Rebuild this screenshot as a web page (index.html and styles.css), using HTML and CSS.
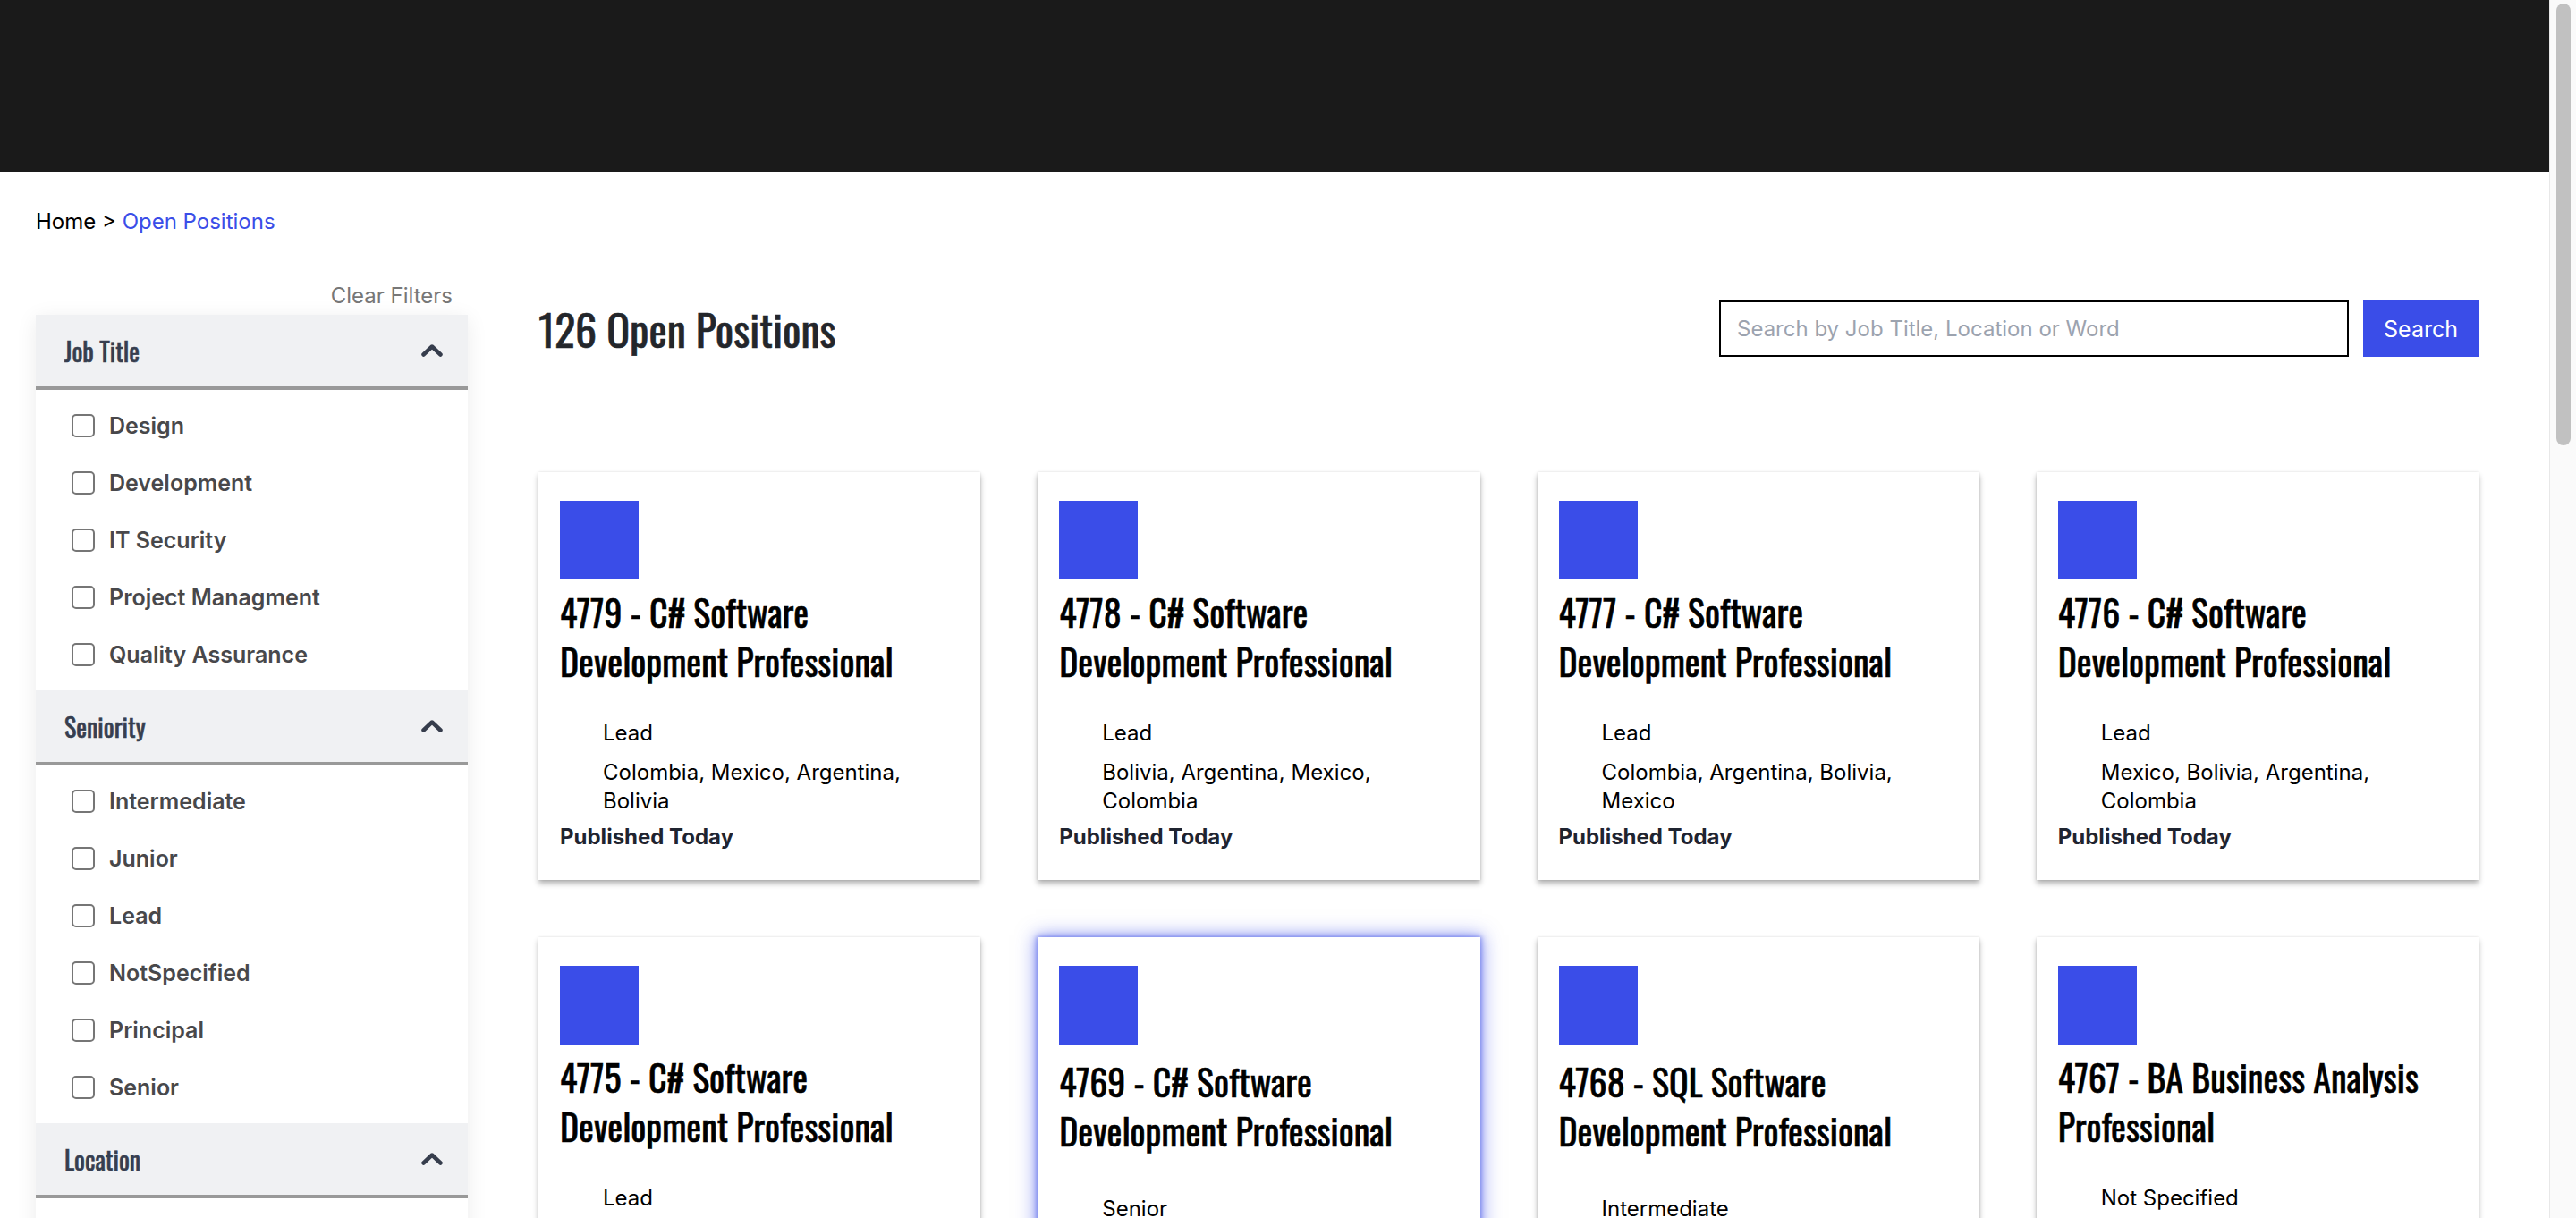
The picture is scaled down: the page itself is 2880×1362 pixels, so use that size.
FILE: index.html
```html
<!DOCTYPE html>
<html lang="en">
<head>
<meta charset="utf-8">
<title>Open Positions</title>
<link rel="stylesheet" href="styles.css">
</head>
<body>
<header class="topbar"></header>
<div class="page">
  <nav class="breadcrumb"><span class="crumb-home">Home &gt; </span><a class="crumb-current" href="#">Open Positions</a></nav>
  <div class="layout">
    <aside class="sidebar">
      <div class="clear-row"><a class="clear-link" href="#">Clear Filters</a></div>
      <div class="filters">
        <section class="filter">
          <div class="filter-head"><span class="filter-title">Job Title</span>
            <svg class="chev" viewBox="0 0 24 14" width="24" height="14"><polyline points="2.5,11.5 12,2.5 21.5,11.5"/></svg></div>
          <ul class="filter-list">
            <li class="opt"><input type="checkbox" class="cb"><span>Design</span></li>
            <li class="opt"><input type="checkbox" class="cb"><span>Development</span></li>
            <li class="opt"><input type="checkbox" class="cb"><span>IT Security</span></li>
            <li class="opt"><input type="checkbox" class="cb"><span>Project Managment</span></li>
            <li class="opt"><input type="checkbox" class="cb"><span>Quality Assurance</span></li>
          </ul>
        </section>
        <section class="filter">
          <div class="filter-head"><span class="filter-title">Seniority</span>
            <svg class="chev" viewBox="0 0 24 14" width="24" height="14"><polyline points="2.5,11.5 12,2.5 21.5,11.5"/></svg></div>
          <ul class="filter-list">
            <li class="opt"><input type="checkbox" class="cb"><span>Intermediate</span></li>
            <li class="opt"><input type="checkbox" class="cb"><span>Junior</span></li>
            <li class="opt"><input type="checkbox" class="cb"><span>Lead</span></li>
            <li class="opt"><input type="checkbox" class="cb"><span>NotSpecified</span></li>
            <li class="opt"><input type="checkbox" class="cb"><span>Principal</span></li>
            <li class="opt"><input type="checkbox" class="cb"><span>Senior</span></li>
          </ul>
        </section>
        <section class="filter">
          <div class="filter-head"><span class="filter-title">Location</span>
            <svg class="chev" viewBox="0 0 24 14" width="24" height="14"><polyline points="2.5,11.5 12,2.5 21.5,11.5"/></svg></div>
          <ul class="filter-list">
            <li class="opt"><input type="checkbox" class="cb"><span>Argentina</span></li>
            <li class="opt"><input type="checkbox" class="cb"><span>Bolivia</span></li>
            <li class="opt"><input type="checkbox" class="cb"><span>Colombia</span></li>
            <li class="opt"><input type="checkbox" class="cb"><span>Mexico</span></li>
          </ul>
        </section>
      </div>
    </aside>
    <main class="main">
      <div class="toolbar">
        <h1 class="count">126 Open Positions</h1>
        <form class="search">
          <input class="search-input" type="text" placeholder="Search by Job Title, Location or Word">
          <button class="search-btn" type="button">Search</button>
        </form>
      </div>
      <div class="cards">
        <article class="card"><div class="logo"></div><h2 class="card-title">4779 - C# Software Development Professional</h2><p class="meta">Lead</p><p class="meta meta-loc">Colombia, Mexico, Argentina, Bolivia</p><p class="published">Published Today</p></article>
        <article class="card"><div class="logo"></div><h2 class="card-title">4778 - C# Software Development Professional</h2><p class="meta">Lead</p><p class="meta meta-loc">Bolivia, Argentina, Mexico, Colombia</p><p class="published">Published Today</p></article>
        <article class="card"><div class="logo"></div><h2 class="card-title">4777 - C# Software Development Professional</h2><p class="meta">Lead</p><p class="meta meta-loc">Colombia, Argentina, Bolivia, Mexico</p><p class="published">Published Today</p></article>
        <article class="card"><div class="logo"></div><h2 class="card-title">4776 - C# Software Development Professional</h2><p class="meta">Lead</p><p class="meta meta-loc">Mexico, Bolivia, Argentina, Colombia</p><p class="published">Published Today</p></article>

        <article class="card"><div class="logo"></div><h2 class="card-title">4775 - C# Software Development Professional</h2><p class="meta">Lead</p><p class="meta meta-loc">Argentina, Colombia, Mexico, Bolivia</p><p class="published">Published Today</p></article>
        <article class="card card--shifted card--active"><div class="logo"></div><h2 class="card-title">4769 - C# Software Development Professional</h2><p class="meta">Senior</p><p class="meta meta-loc">Colombia, Mexico</p><p class="published">Published Today</p></article>
        <article class="card card--shifted"><div class="logo"></div><h2 class="card-title">4768 - SQL Software Development Professional</h2><p class="meta">Intermediate</p><p class="meta meta-loc">Argentina, Bolivia</p><p class="published">Published Today</p></article>
        <article class="card"><div class="logo"></div><h2 class="card-title">4767 - BA Business Analysis Professional</h2><p class="meta">Not Specified</p><p class="meta meta-loc">Mexico, Colombia</p><p class="published">Published Today</p></article>

        <article class="card"><div class="logo"></div><h2 class="card-title">4766 - Java Software Development Professional</h2><p class="meta">Senior</p><p class="meta meta-loc">Colombia, Argentina</p><p class="published">Published Yesterday</p></article>
        <article class="card"><div class="logo"></div><h2 class="card-title">4765 - QA Automation Engineering Professional</h2><p class="meta">Intermediate</p><p class="meta meta-loc">Mexico, Bolivia</p><p class="published">Published Yesterday</p></article>
        <article class="card"><div class="logo"></div><h2 class="card-title">4764 - UX/UI Design Professional</h2><p class="meta">Junior</p><p class="meta meta-loc">Argentina</p><p class="published">Published Yesterday</p></article>
        <article class="card"><div class="logo"></div><h2 class="card-title">4763 - IT Security Analysis Professional</h2><p class="meta">Lead</p><p class="meta meta-loc">Colombia</p><p class="published">Published Yesterday</p></article>

        <article class="card"><div class="logo"></div><h2 class="card-title">4762 - C# Software Development Professional</h2><p class="meta">Principal</p><p class="meta meta-loc">Bolivia, Mexico</p><p class="published">Published 2 days ago</p></article>
        <article class="card"><div class="logo"></div><h2 class="card-title">4761 - PM Project Management Professional</h2><p class="meta">Senior</p><p class="meta meta-loc">Argentina, Colombia</p><p class="published">Published 2 days ago</p></article>
        <article class="card"><div class="logo"></div><h2 class="card-title">4760 - SQL Software Development Professional</h2><p class="meta">Intermediate</p><p class="meta meta-loc">Mexico</p><p class="published">Published 2 days ago</p></article>
        <article class="card"><div class="logo"></div><h2 class="card-title">4759 - C# Software Development Professional</h2><p class="meta">Lead</p><p class="meta meta-loc">Colombia, Bolivia</p><p class="published">Published 2 days ago</p></article>
      </div>
    </main>
  </div>
</div>
<div class="scrollbar"><div class="scroll-thumb"></div></div>
</body>
</html>
```
FILE: styles.css
```css
* { box-sizing: border-box; }

html, body { margin: 0; padding: 0; }
body {
  font-family: "Inter", "Liberation Sans", sans-serif;
  color: #000;
  background: #fff;
  padding-right: 30px;
}

.topbar { height: 192px; background: #1a1a1a; }

/* overlay scrollbar (screenshots hide the native one) */
.scrollbar {
  position: fixed;
  top: 0;
  right: 0;
  width: 30px;
  height: 100vh;
  background: #fafafa;
  border-left: 1px solid #e8e8e8;
}
.scroll-thumb {
  position: absolute;
  top: 4px;
  left: 7px;
  width: 16px;
  height: 494px;
  border-radius: 8px;
  background: #c1c1c1;
}

.page { padding: 40px 79px 116px 40px; }

.breadcrumb { font-size: 24px; line-height: 32px; }
.crumb-home { color: #000; }
.crumb-current { color: #3a4de8; text-decoration: none; }

.layout {
  display: grid;
  grid-template-columns: 483px 1fr;
  column-gap: 79px;
  margin-top: 51px;
  align-items: start;
}

/* Sidebar */
.clear-row { text-align: right; padding-right: 17px; font-size: 24px; line-height: 32px; }
.clear-link { color: #777; text-decoration: none; }

.filters {
  margin-top: 5px;
  background: #fff;
  box-shadow: 0 4px 22px rgba(0, 0, 0, 0.08);
}
.filter-head {
  height: 84px;
  background: #f0f1f3;
  border-bottom: 4px solid #999;
  display: flex;
  align-items: center;
  justify-content: space-between;
  padding: 0 28px 0 32px;
}
.filter-title, .count, .card-title {
  font-family: "Oswald", "Open Sans", sans-serif;
  font-weight: 400;
  -webkit-text-stroke: 0.6px currentColor;
}
.filter-title {
  font-size: 28px;
  color: #363e4f;
}
.chev { fill: none; stroke: #363d4c; stroke-width: 4.5; stroke-linecap: round; stroke-linejoin: round; }

.filter-list { list-style: none; margin: 0; padding: 8px 0; }
.opt {
  height: 64px;
  display: flex;
  align-items: center;
  gap: 16px;
  padding-left: 40px;
  font-size: 25px;
  font-weight: 600;
  color: #48484b;
}
.cb {
  -webkit-appearance: none;
  appearance: none;
  margin: 0;
  width: 26px;
  height: 26px;
  border: 2px solid #767676;
  border-radius: 5px;
  background: #fff;
  flex: none;
}

/* Main */
.main { padding-top: 21px; }
.toolbar {
  height: 63px;
  display: flex;
  align-items: center;
  justify-content: space-between;
}
.count {
  margin: 0;
  font-size: 48px;
  color: #23262b;
  line-height: 63px;
}
.search { display: flex; gap: 16px; }
.search-input {
  width: 704px;
  height: 63px;
  border: 2px solid #000;
  border-radius: 0;
  padding: 0 18px;
  font-family: "Inter", "Liberation Sans", sans-serif;
  font-size: 24px;
  color: #111;
  outline: none;
}
.search-input::placeholder { color: #9ca3af; }
.search-btn {
  width: 129px;
  height: 63px;
  border: 0;
  background: #3a4de8;
  color: #fff;
  font-family: "Inter", "Liberation Sans", sans-serif;
  font-size: 25px;
  padding: 0;
}

.cards {
  margin-top: 129px;
  display: grid;
  grid-template-columns: repeat(4, 1fr);
  gap: 64px;
}
.card {
  background: #fff;
  padding: 32px 24px 32px 24px;
  box-shadow: 0 4px 6px rgba(0, 0, 0, 0.3), 0 0 2px rgba(0, 0, 0, 0.12);
}
.card--active {
  box-shadow: 0 0 20px 2px rgba(58, 77, 232, 0.55), 0 0 6px 1px rgba(58, 77, 232, 0.6);
}
.logo { width: 88px; height: 88px; background: #3a4de8; }
.card-title {
  margin: 9px 0 37px;
  font-size: 40px;
  line-height: 55px;
  color: #000;
}
.card--shifted .card-title { margin: 14px 0 44px; }
.meta {
  margin: 0;
  padding-left: 48px;
  font-size: 24px;
  line-height: 32px;
  color: #000;
}
.meta-loc { margin-top: 12px; }
.published {
  margin: 8px 0 0;
  font-size: 24px;
  line-height: 32px;
  font-weight: 700;
  color: #1f2430;
}
```
